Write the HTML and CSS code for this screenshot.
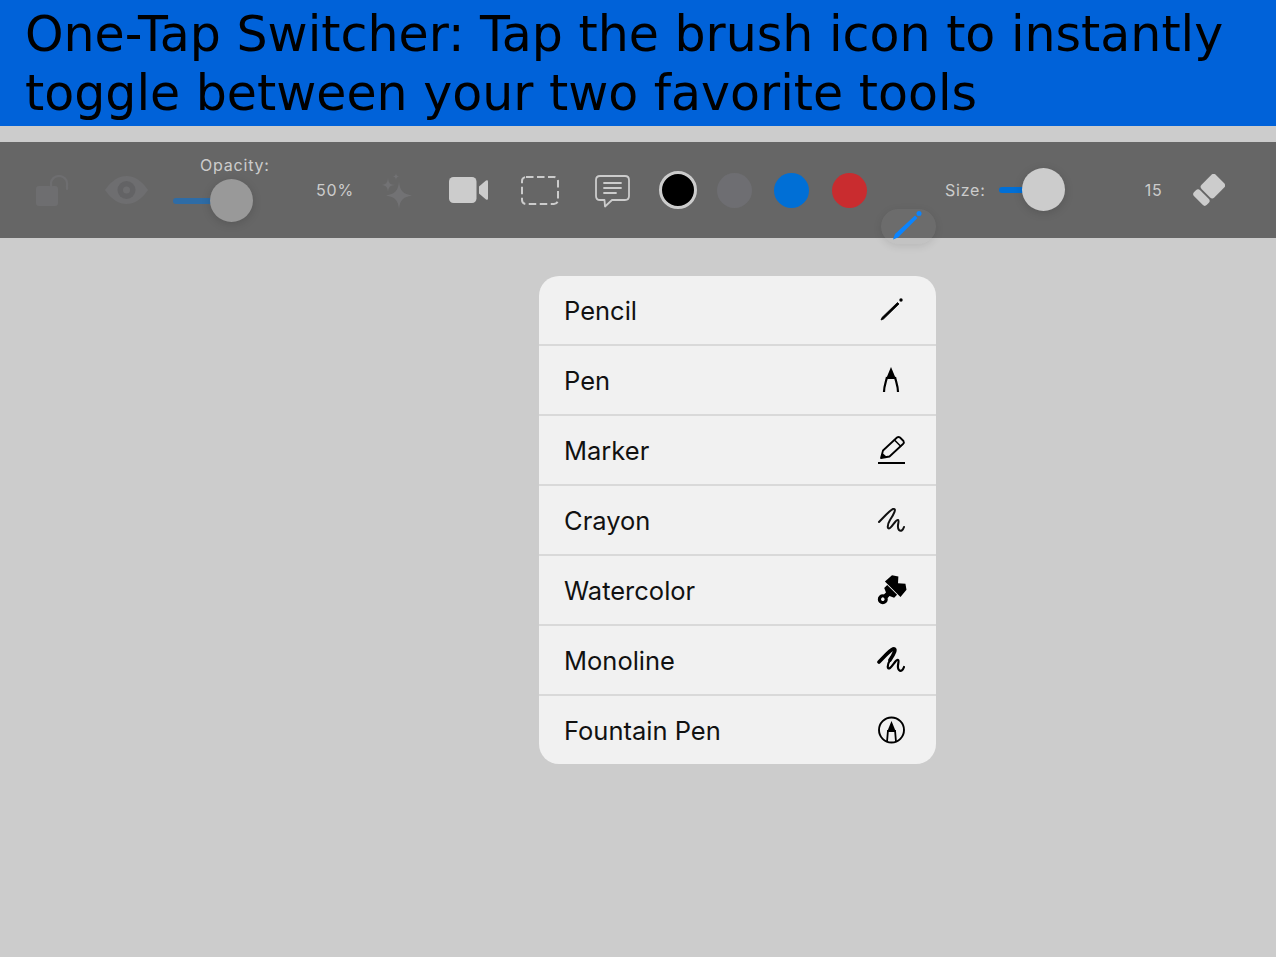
FILE: index.html
```html
<!DOCTYPE html>
<html lang="en">
<head>
    <meta charset="UTF-8">
    <meta name="viewport" content="width=device-width, initial-scale=1.0">
    <title>One-Tap Switcher</title>
    <link rel="stylesheet" href="styles.css">
</head>
<body>
    <div class="banner">One-Tap Switcher: Tap the brush icon to instantly toggle between your two favorite tools</div>

    <div class="toolbar">
        <svg class="tool tool-lock" width="34" height="32" viewBox="0 0 34 32">
            <rect x="0" y="11" width="22" height="20" rx="3" fill="#6e6e70"/>
            <path d="M15 11V8a8 7 0 0 1 16 0v6" fill="none" stroke="#6e6e70" stroke-width="2.2" stroke-linecap="round"/>
        </svg>
        <svg class="tool tool-eye" width="43" height="28" viewBox="0 0 43 28">
            <path d="M0 14C7 4 14 0 21.500 0S36 4 43 14C36 24 29 28 21.500 28S7 24 0 14Z" fill="#6e6e70"/>
            <circle cx="21.500" cy="14" r="9" fill="#636365"/>
            <circle cx="21.500" cy="14" r="3.500" fill="#6e6e70"/>
        </svg>
        <div class="slider-group opacity-group">
            <span class="tool-label opacity-label">Opacity:</span>
            <div class="slider opacity-slider">
                <div class="slider-fill"></div>
                <div class="slider-thumb"></div>
            </div>
        </div>
        <span class="tool-label opacity-value">50%</span>
        <svg class="tool tool-sparkle" width="30" height="36" viewBox="0 0 30 36">
            <path d="M17 9C18 18 21 21 30 22.500C21 24 18 27 17 36C16 27 13 24 4 22.500C13 21 16 18 17 9Z" fill="#727274"/>
            <path d="M6 5C6.500 10 8 11.500 13 12C8 12.500 6.500 14 6 19C5.500 14 4 12.500 -1 12C4 11.500 5.500 10 6 5Z" fill="#727274"/>
            <path d="M14 0C14.300 2.500 15 3.200 17.500 3.500C15 3.800 14.300 4.500 14 7C13.700 4.500 13 3.800 10.500 3.500C13 3.200 13.700 2.500 14 0Z" fill="#727274"/>
        </svg>
        <svg class="tool tool-video" width="39" height="26" viewBox="0 0 39 26">
            <rect x="0" y="0" width="27.500" height="26" rx="4.500" fill="#cccccc"/>
            <path d="M30 9.500L37 3.500Q39 2.500 39 4.500V21.500Q39 23.500 37 22.500L30 16.500Z" fill="#cccccc"/>
        </svg>
        <svg class="tool tool-select" width="38" height="29" viewBox="0 0 38 29">
            <rect x="1" y="1" width="36" height="27" rx="4" fill="none" stroke="#cccccc" stroke-width="2" stroke-dasharray="7.500 3.500"/>
        </svg>
        <svg class="tool tool-comment" width="35" height="33" viewBox="0 0 35 33">
            <path d="M5 1H30Q34 1 34 5V21Q34 25 30 25H17L10 31.500L9.500 25H5Q1 25 1 21V5Q1 1 5 1Z" fill="none" stroke="#cccccc" stroke-width="1.800" stroke-linejoin="round"/>
            <path d="M9 8H26M9 13H26M9 18H21" stroke="#cccccc" stroke-width="1.800" stroke-linecap="round"/>
        </svg>
        <div class="colors">
            <span class="color color-black"></span>
            <span class="color color-gray"></span>
            <span class="color color-blue"></span>
            <span class="color color-red"></span>
        </div>
        <span class="tool-label size-label">Size:</span>
        <div class="slider size-slider">
            <div class="slider-fill"></div>
            <div class="slider-thumb"></div>
        </div>
        <span class="tool-label size-value">15</span>
        <svg class="tool tool-eraser" width="32" height="32" viewBox="0 0 32 32">
            <g transform="rotate(45 16 16)" fill="#cccccc">
                <rect x="7" y="0.500" width="18" height="20" rx="3"/>
                <rect x="7" y="22.500" width="18" height="8.500" rx="3"/>
            </g>
        </svg>
        <div class="brush-pill">
            <svg width="32" height="32" viewBox="0 0 32 32">
                <path d="M3 29.500L5 24L25 5.500L27.500 8L8 27.500Z" fill="#0a84ff"/>
                <circle cx="29" cy="3.500" r="2.500" fill="#0a84ff"/>
            </svg>
        </div>
    </div>

    <div class="menu">
        <div class="menu-row">
            <span>Pencil</span>
            <svg width="30" height="30" viewBox="0 0 30 30">
                <path d="M4 25L5 22.500L20.500 7.500L22 9L6.500 24Z" fill="#000" stroke="#000" stroke-width="0.800" stroke-linejoin="round"/>
                <circle cx="24" cy="5" r="1.700" fill="#000"/>
            </svg>
        </div>
        <div class="menu-row">
            <span>Pen</span>
            <svg width="30" height="30" viewBox="0 0 30 30">
                <path d="M14 2L19 14H9Z" fill="#000"/>
                <path d="M10 12C9 17 7 21 7 27M18 12C19 17 21 21 21 27" fill="none" stroke="#000" stroke-width="2.200"/>
            </svg>
        </div>
        <div class="menu-row">
            <span>Marker</span>
            <svg width="30" height="30" viewBox="0 0 30 30">
                <path d="M4 23L6 15.500L20 2.500Q21.500 1.500 23 2.500L26.500 6Q27.500 7.500 26 9L12.500 21.500Z" fill="none" stroke="#000" stroke-width="1.800" stroke-linejoin="round"/>
                <path d="M17.500 5L24 11.500" stroke="#000" stroke-width="1.500"/>
                <path d="M5.500 18L10 22L4 23Z" fill="#000"/>
                <path d="M1 28H28" stroke="#000" stroke-width="1.900"/>
            </svg>
        </div>
        <div class="menu-row">
            <span>Crayon</span>
            <svg width="30" height="30" viewBox="0 0 30 30">
                <path d="M2 17C7 12 13 5 16 4C20 3 17 9 13 15C10 20 10 25 13 23C16 21 19 14 21 15C23 16 19 22 22 25C24 27 26 25 27 22" fill="none" stroke="#111" stroke-width="2" stroke-linecap="round"/>
            </svg>
        </div>
        <div class="menu-row">
            <span>Watercolor</span>
            <svg width="30" height="30" viewBox="0 0 30 30">
                <g transform="rotate(45 15 15)">
                    <path d="M4 14L4.500 4.500L10 1L14.500 6L20 1L25 4.500L26 14Z" fill="#000"/>
                    <path d="M8 14.800H22V19L17.500 21V24H12.500V21L8 19Z" fill="#000"/>
                    <circle cx="15" cy="28" r="5" fill="#000"/>
                    <circle cx="15" cy="28" r="1.800" fill="#f1f1f1"/>
                </g>
            </svg>
        </div>
        <div class="menu-row">
            <span>Monoline</span>
            <svg width="30" height="30" viewBox="0 0 30 30">
                <path d="M2 17C7 12 13 5 16 4C20 3 17 9 13 15" fill="none" stroke="#000" stroke-width="3.600" stroke-linecap="round"/>
                <path d="M13 15C10 20 10 25 13 23C16 21 19 14 21 15C23 16 19 22 22 25C24 27 26 25 27 22" fill="none" stroke="#000" stroke-width="2.200" stroke-linecap="round"/>
            </svg>
        </div>
        <div class="menu-row">
            <span>Fountain Pen</span>
            <svg width="30" height="30" viewBox="0 0 30 30">
                <circle cx="14.500" cy="15" r="12.500" fill="none" stroke="#000" stroke-width="1.900"/>
                <path d="M14.500 6L19 17H10Z" fill="#000"/>
                <path d="M11 15L10 27M18 15L19 27" stroke="#000" stroke-width="1.800"/>
            </svg>
        </div>
    </div>
</body>
</html>
```

FILE: styles.css
```css
body {
    margin: 0;
    background-color: #cccccc;
    font-family: 'Inter', 'Roboto', sans-serif;
    height: 957px;
    overflow: hidden;
}
.banner {
    background-color: #0062d9;
    color: #000;
    font-family: 'DejaVu Sans', sans-serif;
    font-size: 49px;
    line-height: 59px;
    height: 126px;
    padding: 5px 25px 0;
    box-sizing: border-box;
}
.toolbar {
    position: relative;
    display: flex;
    align-items: center;
    height: 96px;
    margin-top: 16px;
    padding-left: 36px;
    background-color: #666666;
}
.tool {
    flex: none;
}
.tool-label {
    font-size: 16px;
    color: #cccccc;
    letter-spacing: 0.8px;
    white-space: nowrap;
}
.tool-lock {
    margin-top: 2px;
}
.tool-eye {
    margin-left: 35px;
}

/* Sliders: the thumb lies over the track */
.slider-group {
    display: flex;
    flex-direction: column;
}
.opacity-group {
    width: 80px;
    margin-left: 25px;
    margin-bottom: 18px;
}
.opacity-label {
    margin-left: 27px;
    margin-top: -3px;
}
.slider {
    position: relative;
    flex: none;
    height: 6px;
}
.opacity-slider {
    margin-top: 23px;
    width: 80px;
}
.size-slider {
    width: 66px;
    margin-left: 13px;
}
.slider-fill {
    height: 6px;
    width: 40px;
    border-radius: 3px;
    background-color: #2e6ca6;
}
.size-slider .slider-fill {
    background-color: #006fd6;
}
.slider-thumb {
    position: absolute;
    top: -19px;
    right: 0;
    width: 43px;
    height: 43px;
    border-radius: 50%;
    background-color: #999999;
    box-shadow: 0 2px 10px rgba(0, 0, 0, 0.15);
}
.size-slider .slider-thumb {
    background-color: #cccccc;
}
.opacity-value {
    margin-left: 63px;
}
.tool-sparkle {
    margin-left: 28px;
    margin-top: 2px;
}
.tool-video {
    margin-left: 37px;
}
.tool-select {
    margin-left: 33px;
}
.tool-comment {
    margin-left: 36px;
    margin-top: 2px;
}
.colors {
    display: flex;
    align-items: center;
    gap: 22px;
    margin-left: 29px;
}
.color {
    display: block;
    width: 35px;
    height: 35px;
    border-radius: 50%;
}
.color-black {
    width: 32px;
    height: 32px;
    background-color: #000;
    border: 3px solid #cccccc;
    margin-right: -2px;
}
.color-gray {
    background-color: #6e6e72;
}
.color-blue {
    background-color: #006fd6;
}
.color-red {
    background-color: #c92c2f;
    margin-left: 1px;
}
.size-label {
    margin-left: 78px;
}
.size-value {
    margin-left: 80px;
}
.tool-eraser {
    margin-left: 31px;
}
.brush-pill {
    position: absolute;
    left: 881px;
    top: 67px;
    width: 55px;
    height: 35px;
    border-radius: 18px;
    background-color: rgba(150, 150, 150, 0.15);
    box-shadow: 0 2px 8px rgba(0, 0, 0, 0.1);
    display: flex;
    align-items: center;
    justify-content: center;
}
.brush-pill svg {
    margin-left: -6px;
    margin-top: -1px;
    overflow: visible;
}

/* Tool menu */
.menu {
    width: 397px;
    margin: 38px 0 0 539px;
    border-radius: 20px;
    overflow: hidden;
    background-color: #f1f1f1;
}
.menu-row {
    display: flex;
    align-items: center;
    justify-content: space-between;
    height: 68px;
    padding: 0 29px 0 25px;
    border-bottom: 2px solid #d9d9d9;
    font-size: 25.5px;
    color: #111;
}
.menu-row:last-child {
    border-bottom: none;
}
```
